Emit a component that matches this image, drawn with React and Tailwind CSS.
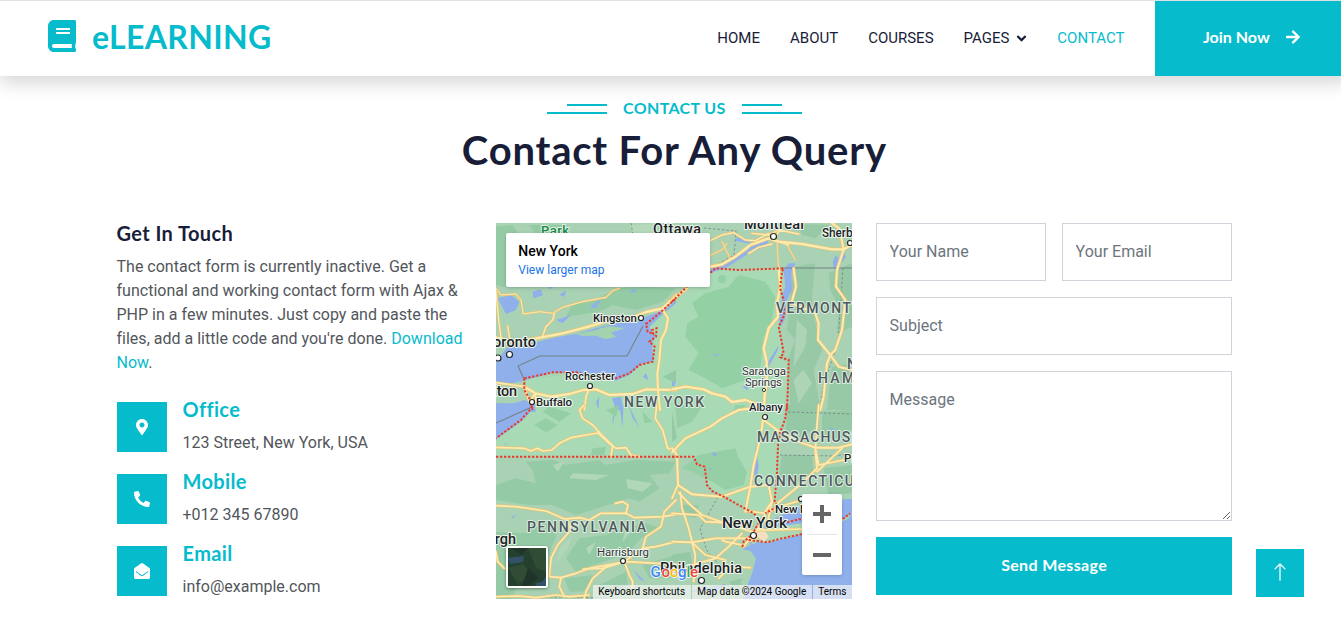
import { FaBook, FaArrowRight, FaMapMarkerAlt, FaPhoneAlt, FaEnvelopeOpen, FaAngleDown } from 'react-icons/fa';
import { BsArrowUp } from 'react-icons/bs';

const quads = {
  tl: 'translate(0 -3) scale(.33333)',
  tr: 'translate(176 -3) scale(.33333)',
  bl: 'translate(0 182) scale(.33333)',
  br: 'translate(176 182) scale(.33333)',
};

const roads = {
  tl: [
    ['M0 352 L50 365 L120 355 L200 340 L270 322 L330 304 L400 296 L450 276 L500 265 L540 225', 8],
    ['M0 205 L14 225 L60 222 L75 240 L82 282 L130 275 L170 280 L200 262 L260 245 L330 232 L350 212 L370 205', 4],
    ['M0 215 L8 300 L15 352 M35 318 L42 362 M175 282 L170 300 L150 320 L140 348', 5],
    ['M500 270 L516 295 L510 330 L495 360 L490 420 L484 460 L486 510 L492 570', 7],
    ['M85 500 L118 520 L165 530 L220 522 L262 510 L300 508 L340 525 L410 522 L450 508 L540 510', 8],
    ['M0 488 L50 495 L85 500 L100 545 L118 520 L120 545 M282 500 L270 530 L265 570', 6],
  ],
  tr: [
    ['M0 240 L45 205 M115 140 L150 133 L190 110 L235 75 L290 55 L320 65 L390 72 L480 88 L515 88 L540 75', 8],
    ['M115 62 L150 45 L185 38 L220 60 L250 62 L290 40 M240 40 L290 45 L320 30 L380 42 M330 20 L305 60 L350 75 M230 100 L260 82 L300 72', 5],
    ['M115 105 L150 90 L165 70 M150 65 L175 115 M315 68 L320 145 M345 75 L370 120', 3],
    ['M320 145 L325 200 L315 250 L318 290 L290 325 L275 385 L284 425 L284 490 L278 525 L276 570', 8],
    ['M365 145 L372 200 L358 250 L390 262 L430 280 L440 310 L438 360 L475 405 L500 440 L540 450', 7],
    ['M480 10 L502 25 L515 88 L495 150 L492 200 L520 240 L510 330 L490 390 L475 405 L465 430 L455 530 L445 570', 7],
    ['M0 508 L40 500 L95 508 L120 520 L160 530 L180 546 L220 540 L270 558 L300 570', 8],
  ],
  bl: [
    ['M0 127 L85 130 L105 138 L125 130 L140 138 L168 135 L190 115 L225 98 L305 84 L340 115 L360 130 L390 128 L405 150 L430 155', 6],
    ['M265 0 L250 15 L260 40 L290 60 L315 88 L350 122 L345 155 M482 0 L478 40 L500 75 L515 130 L540 135', 6],
    ['M0 302 L60 305 L150 318 L205 342 L250 338 L280 345 L315 325 L390 325 L415 338 L500 335 L540 328', 6],
    ['M358 295 L380 290 L396 300 L390 325 M540 285 L505 320 L495 365 L450 395 L440 430 L385 470 L320 490 L262 492', 6],
    ['M215 345 L225 375 L185 420 L165 460 L160 515 L195 518 L240 505 L280 490 L390 470 L540 478', 6],
    ['M195 518 L190 545 L205 575 M385 470 L400 510 L410 530 L408 570 M335 482 L290 520 L270 560 L262 590 M0 575 L70 573 L120 578 L180 570 L220 575 L280 570', 6],
    ['M540 410 L480 425 L440 430 M0 440 L5 470 L25 490', 6],
  ],
  br: [
    ['M0 142 L40 100 L115 65 L150 40 L200 15 L275 5', 7],
    ['M275 30 L265 100 L245 180 L235 245 L220 320 M275 45 L325 82 L380 110 L430 128 L500 128 L540 118', 7],
    ['M0 130 L15 150 L18 240 L60 268 L150 275 L235 245 L290 240 L300 290 L280 320', 7],
    ['M18 240 L0 280 M20 262 L50 295 L90 330 L160 355 L240 380 M0 325 L80 330 L100 350 L240 358', 6],
    ['M0 410 L60 412 L130 400 L240 400 M25 262 L30 310 L50 370 L70 450 L65 530', 6],
    ['M60 480 L130 460 L170 425 L210 385 M60 412 L100 450 L160 465 L160 500 L140 520 M180 485 L235 488 M150 405 L160 410 L210 420', 6],
    ['M440 0 L435 60 L430 140 L435 190 L390 235 L310 300 M430 128 L440 180 L515 165 L540 150 M435 200 L510 130', 6],
    ['M225 318 L280 325 L260 370 L245 390 M290 320 L340 300 L400 282 M260 375 L300 375 L390 372 M245 385 L280 340 M255 400 L225 410 L215 425 M300 290 L285 360', 6],
  ],
};

const borders = {
  tl: 'M85 475 L170 457 L240 457 L300 470 L360 475 L400 460 L430 435 L470 425 L476 380 L460 365 L480 350 L482 325 L468 330 L472 342 L455 335 L450 312 L490 280 L540 235 M85 475 L85 510 L100 535 L110 570',
  tr: 'M0 245 L45 200 M115 158 L130 145 L200 150 L335 145 L330 155 L324 205 L335 240 L337 285 L320 320 L330 370 L335 400 L325 412 L350 420 L348 500 L345 570',
  bl: 'M110 5 L95 22 L75 45 L40 70 L0 100 M0 155 L540 155',
  br: 'M0 155 L65 155 L75 178 L98 185 L105 240 L120 258 L155 275 L245 325 L265 345 L240 390 L215 410 L210 430 M345 0 L340 40 L325 80 L318 120 L315 200 L308 290 L316 305 L280 325 M345 352 L380 343 L430 340 L515 340 L535 325 M230 405 L285 412 L330 400 L400 385',
};

const places = [
  ['Park', 45, 12, 28, 13, 'park'],
  ['Ottawa', 157, 11, 48, 14.5, 'city'],
  ['Montreal', 248, 6, 60, 14.5, 'city'],
  ['Sherbrooke', 326, 14, 60, 12, 'town'],
  ['Kingston', 97, 99, 44, 11.5, 'town'],
  ['Toronto', -11, 124, 51, 14.5, 'city'],
  ['Hamilton', -36, 173, 57, 14.5, 'city'],
  ['Rochester', 69, 157, 50, 11, 'town'],
  ['Buffalo', 40, 183, 36, 11.5, 'town'],
  ['Saratoga', 246, 152, 44, 11.5, 'small'],
  ['Springs', 249, 163, 37, 11.5, 'small'],
  ['Albany', 253, 188, 34, 11.5, 'town'],
  ['Pittsburgh', -48, 321, 68, 14.5, 'city'],
  ['Harrisburg', 101, 333, 52, 11.5, 'small'],
  ['New York', 226, 305, 65, 15.5, 'city'],
  ['New Haven', 279, 290, 57, 11.5, 'town'],
  ['Philadelphia', 164, 350, 82, 14.5, 'city'],
  ['Providence', 348, 239, 60, 11.5, 'town'],
  ['NEW YORK', 128, 184, 80, 14, 'state'],
  ['VERMONT', 280, 90, 75, 14, 'state'],
  ['NEW', 351, 146, 38, 14, 'state'],
  ['HAMPSHIRE', 322, 160, 98, 14, 'state'],
  ['MASSACHUSETTS', 261, 219, 131, 14, 'state'],
  ['CONNECTICUT', 258, 263, 110, 14, 'state'],
  ['PENNSYLVANIA', 31, 309, 119, 14, 'state'],
];

const look = {
  park: 'fill-[#188646] font-medium stroke-[#e2f3e5]',
  city: 'fill-[#202124] font-medium stroke-[#eef7ef]',
  town: 'fill-[#202124] font-medium stroke-[#eef7ef]',
  small: 'fill-[#303236] font-normal stroke-[#eef7ef]',
  state: 'fill-[#50585b] font-medium stroke-[#dceee0]',
};

function MapDrawing() {
  return (
    <svg width="356" height="376" viewBox="0 0 356 376" className="block font-['Roboto',sans-serif]">
      <rect width="356" height="376" fill="#a8d2b3" />
      <path fill="#a8dbb5" d="M28 156 L80 151 L115 155 L157 138 L158 113 L150 98 L190 63 L215 46 L286 46 L284 98 L286 137 L292 140 L288 182 L280 282 L263 296 L227 273 L211 264 L208 243 L196 234 L0 234 L0 216 L36 185 Z" />
      <g transform={quads.tl}>
        <path fill="#94cba4" d="M0 20 L50 15 L70 45 L30 120 L60 150 L40 205 L0 195 Z M360 205 L450 200 L540 205 L500 245 L420 270 L350 255 L310 275 L210 290 L230 250 L300 240 Z M100 15 L200 15 L210 40 L120 45 Z M500 470 L540 450 L540 490 Z" />
        <path fill="#b4dabb" d="M60 90 L120 110 L150 180 L110 190 L80 160 Z M400 15 L470 12 L480 40 L410 40 Z" />
        <path fill="#8fb0eb" d="M5 235 L45 225 L70 245 L60 270 L30 282 Z M110 215 L135 208 L140 226 L112 235 Z M180 300 L225 285 L200 310 Z M280 262 L318 235 L300 265 Z M150 195 L180 198 L160 208 Z M400 220 L415 205 L420 216 Z M190 225 L210 210 L205 230 Z" />
        <path fill="#8fb0eb" d="M0 490 L0 430 L20 400 L35 380 L70 374 L125 365 L180 352 L240 342 L300 324 L360 310 L430 304 L450 290 L510 268 L540 240 L540 250 L490 292 L460 322 L478 350 L468 370 L472 425 L435 432 L400 465 L360 482 L300 476 L240 460 L170 458 L90 480 L40 491 Z M0 550 L45 553 L85 540 L115 550 L120 575 L0 580 Z" />
        <path fill="#a3d2af" d="M240 342 L290 332 L340 318 L385 325 L345 338 L360 350 L330 358 L300 347 L260 348 Z" />
        <path fill="#8fb0eb" d="M300 545 L310 530 L307 570 Z M348 535 L375 530 L382 570 L360 570 Z M440 470 L450 460 L458 480 Z" />
      </g>
      <g transform={quads.tr}>
        <path fill="#93d0a4" d="M200 165 L280 185 L310 230 L300 300 L275 350 L265 440 L220 480 L150 505 L110 480 L50 450 L80 400 L40 350 L45 310 L80 290 L60 250 L100 220 L170 200 Z" />
        <circle cx="150" cy="177" r="12" fill="#93d0a4" />
        <path fill="#98c9a7" d="M365 140 L430 130 L420 230 L430 310 L450 390 L425 450 L445 570 L355 570 L350 410 L370 360 L345 330 Z M470 160 L540 130 L540 320 L495 340 L500 260 L475 210 Z M380 12 L470 15 L430 55 L390 45 Z M480 440 L540 430 L540 570 L465 570 Z" />
        <path fill="#aed4b8" d="M375 300 L405 330 L400 380 L365 440 Z M395 450 L420 490 L380 550 L365 480 Z" />
        <path fill="#8fb0eb" d="M115 145 L170 125 L230 90 L235 72 L190 62 L195 50 L240 70 L290 58 L285 78 L235 97 L165 142 L115 160 Z M335 150 L350 130 L370 130 L358 160 L360 210 L345 240 L338 300 L325 320 L320 290 L330 230 L340 200 Z M320 375 L315 395 L290 440 L286 430 Z M212 500 L235 490 L225 510 Z M0 485 L10 485 L8 498 L0 498 Z M490 105 L482 130 L490 155 L500 115 Z M515 95 L508 130 L522 110 Z M125 405 L150 400 L128 410 Z" />
      </g>
      <g transform={quads.bl}>
        <path fill="#8fb0eb" d="M0 -5 L118 -5 L100 25 L75 50 L40 75 L0 103 Z M350 40 L360 5 L350 62 Z M370 0 L382 0 L380 70 Z M398 0 L430 68 L410 40 Z M25 110 L35 125 L28 120 Z M322 260 L335 248 L328 262 Z M375 275 L398 262 L380 278 Z M240 480 L250 455 L245 475 Z M45 335 L60 330 L50 340 Z M412 495 L448 530 L430 522 Z" />
        <path fill="#94caa5" d="M90 170 L170 165 L210 180 L310 165 L330 180 L420 165 L540 170 L520 205 L460 210 L490 250 L430 290 L400 280 L320 305 L240 330 L170 300 L100 300 L0 285 L0 240 L60 220 L120 235 L110 195 Z" />
        <path fill="#94cea4" d="M115 60 L150 40 L185 60 L150 82 Z M160 5 L225 25 L190 50 L140 20 Z M330 15 L370 0 L360 35 Z M440 20 L470 50 L445 55 Z M290 130 L330 125 L325 150 L285 150 Z" />
        <path fill="#94caa5" d="M0 380 L90 385 L160 345 L180 395 L165 430 L150 480 L80 515 L40 590 L0 590 Z M330 390 L430 350 L495 370 L435 400 L390 450 L290 480 L240 500 L210 460 L250 400 Z M205 520 L300 510 L260 560 L220 560 Z M310 540 L390 500 L395 540 L330 570 Z M440 480 L540 450 L540 520 L460 520 Z" />
        <path fill="#b1d7ba" d="M230 205 L340 210 L300 225 L220 220 Z M390 222 L470 235 L440 260 L395 250 Z M190 430 L230 390 L215 430 L180 480 Z M390 360 L430 350 L380 410 Z M270 430 L300 410 L280 450 Z M170 180 L205 170 L185 200 Z" />
      </g>
      <g transform={quads.br}>
        <path fill="#96cfa6" d="M30 190 L80 150 L190 130 L200 160 L225 200 L215 240 L160 255 L120 230 L90 215 L60 200 Z M10 0 L90 5 L60 50 L15 70 Z M190 0 L225 0 L180 30 Z" />
        <path fill="#95c8a5" d="M350 0 L440 0 L430 70 L380 100 L340 80 Z M330 150 L420 150 L425 200 L370 235 L320 220 Z M450 20 L540 15 L540 100 L450 100 Z M30 300 L80 300 L70 340 L30 330 Z M0 450 L55 440 L60 480 L0 510 Z M170 530 L210 520 L200 560 Z M0 20 L15 100 L0 110 Z M455 190 L540 180 L540 265 L470 270 Z" />
        <path fill="#8fb0eb" d="M210 432 L235 438 L252 460 L242 500 L230 530 L222 560 L205 600 L552 600 L552 280 L500 285 L450 300 L370 310 L300 345 L275 365 L285 380 L285 405 L250 415 Z M252 120 L260 180 L252 245 L245 190 Z M475 65 L480 90 L490 75 Z M120 140 L138 148 L125 155 Z M110 185 L120 195 L112 195 Z" />
        <path fill="#abd9b6" d="M250 408 L262 382 L310 365 L390 355 L460 340 L515 342 L540 325 L530 340 L465 370 L390 388 L285 414 Z" />
        <path fill="#f4dfc0" d="M242 375 L275 370 L290 395 L275 412 L262 400 L235 410 Z" />
        <path fill="none" stroke="#8fb0eb" strokeWidth="5" d="M100 590 L120 560 L160 540 L60 560 M240 440 L235 410" />
      </g>
      <g fill="none" stroke="#758286" strokeWidth="1">
        <path d="M28 156 L22 143 L44 133 L131 133 L147 103 M0 200 L36 184 M22 143 L28 156 M286 45 L356 45" strokeWidth="1.1" />
        <path d="M292 189 L356 191 M284 232 L340 233 L356 230 M222 274 L204 306 L211 328 L224 343 M135 0 L137 12 M208 5 L240 8 L238 32 L218 43 M347 45 L342 120 L328 160 L323 190 M0 373 L110 375" strokeDasharray="2.5 2" strokeWidth=".8" />
      </g>
      {Object.keys(roads).map((q) => (
        <g key={q} transform={quads[q]} fill="none" strokeLinejoin="round" strokeLinecap="round">
          {roads[q].map(([d, w]) => <path key={d} d={d} stroke="#e5c477" strokeWidth={w + 3} />)}
          {roads[q].map(([d, w]) => <path key={d} d={d} stroke="#fdebb0" strokeWidth={w - 1} />)}
        </g>
      ))}
      {Object.keys(borders).map((q) => (
        <path key={q} transform={quads[q]} d={borders[q]} fill="none" stroke="#ea3a2c" strokeWidth="6" strokeDasharray="7 5" />
      ))}
      <g fill="#fff" stroke="#24282a" strokeWidth="1.2">
        <circle cx="277.500" cy="13.500" r="3" />
        <circle cx="354" cy="20" r="2.500" />
        <circle cx="145" cy="95" r="2.500" />
        <circle cx="13.500" cy="131.500" r="3" />
        <circle cx="2" cy="135" r="3" />
        <circle cx="94" cy="163" r="2.500" />
        <circle cx="36" cy="179" r="2.500" />
        <circle cx="268" cy="167" r="1.600" strokeWidth=".9" />
        <circle cx="269" cy="194" r="2.500" />
        <circle cx="127" cy="338" r="2.500" />
        <circle cx="257.500" cy="312.500" r="3" />
        <circle cx="205.500" cy="357.500" r="3" />
        <circle cx="305" cy="276" r="2.500" />
      </g>
      {places.map(([name, x, y, width, size, kind]) => (
        <text key={name} x={x} y={y} fontSize={size} textLength={width} strokeWidth="2" strokeLinejoin="round" paintOrder="stroke" className={look[kind]}>
          {name}
        </text>
      ))}
      <g fontSize="15" fontWeight="500" strokeWidth="1.6" stroke="#fff" paintOrder="stroke">
        <text x="154.500" y="354" fill="#4285f4">G</text>
        <text x="165.500" y="354" fill="#ea4335">o</text>
        <text x="174" y="354" fill="#fbbc04">o</text>
        <text x="182" y="354" fill="#4285f4">g</text>
        <text x="190.500" y="354" fill="#34a853">l</text>
        <text x="194" y="354" fill="#ea4335">e</text>
      </g>
    </svg>
  );
}

function MapPanel() {
  return (
    <div className="relative h-[376px] overflow-hidden">
      <MapDrawing />
      <div className="absolute left-2.5 top-2.5 h-[54px] w-[204px] rounded-[2px] bg-white px-3 pt-[9px] font-['Roboto',sans-serif] shadow-[0_1px_4px_-1px_rgba(0,0,0,0.3)]">
        <div className="text-sm leading-[18px] font-medium text-black">New York</div>
        <div className="mt-px text-xs leading-[18px] text-[#1a73e8]">View larger map</div>
      </div>
      <div className="absolute left-2.5 top-[323px] size-[42px] rounded-[3px] border-2 border-white shadow-[0_1px_3px_rgba(0,0,0,0.4)]">
        <svg viewBox="0 0 38 38" className="block size-[38px]">
          <rect width="38" height="38" fill="#26402f" />
          <path fill="#304c34" d="M20 0 L38 0 L38 24 L28 20 Z M0 20 L15 16 L24 27 L10 36 Z" />
          <path fill="#203529" d="M4 0 L20 0 L13 7 Z M20 20 L31 30 L20 38 L14 38 Z" />
          <path fill="#34516a" d="M0 10 L16 8 L15 14 L2 16 Z M38 29 L34 34 L28 35 L28 38 L38 38 Z" />
        </svg>
      </div>
      <div className="absolute left-[306px] top-[271px] flex h-[81px] w-10 flex-col rounded-[2px] bg-white shadow-[0_1px_4px_-1px_rgba(0,0,0,0.3)]">
        <div className="flex h-10 items-center justify-center">
          <svg viewBox="0 0 18 18" className="size-[18px]"><path d="M7 0h4v7h7v4h-7v7H7v-7H0V7h7z" fill="#666" /></svg>
        </div>
        <div className="mx-[5px] h-px bg-[#e6e6e6]" />
        <div className="flex h-10 items-center justify-center">
          <svg viewBox="0 0 18 18" className="size-[18px]"><path d="M0 7h18v4H0z" fill="#666" /></svg>
        </div>
      </div>
      <div className="absolute right-0 bottom-0 flex h-[14px] gap-px font-['Roboto',sans-serif] text-[10px] leading-[14px] whitespace-nowrap text-black">
        <div className="w-[98px] bg-[#f5f5f5]/70 pl-[5px]">Keyboard shortcuts</div>
        <div className="w-[120px] bg-[#f5f5f5]/70 pl-[5px]">Map data ©2024 Google</div>
        <div className="w-[39px] bg-[#f5f5f5]/70 pl-[5px]">Terms</div>
      </div>
    </div>
  );
}

function ContactLine({ icon: Icon, title, text }) {
  return (
    <div className="flex h-[50px] items-center">
      <div className="flex size-[50px] shrink-0 items-center justify-center bg-[#06bbcc] text-white">
        <Icon className="size-4" />
      </div>
      <div className="ml-4">
        <h5 className="-mt-0.5 mb-2.5 font-['Lato',sans-serif] text-xl leading-6 font-bold tracking-[0.35px] text-[#06bbcc]">{title}</h5>
        <p className="leading-6">{text}</p>
      </div>
    </div>
  );
}

const field = 'w-full rounded-none border border-[#ced4da] bg-white px-[12.5px] pb-[2px] text-[#52565b] placeholder:text-[#6c757d] outline-none';

export default function App() {
  return (
    <div className="h-[638px] overflow-hidden bg-white font-['Roboto',sans-serif] text-base text-[#52565b]">
      <div className="w-[1349px]">
        <header className="flex h-[76px] border-t border-[#dee2e6] bg-white shadow-[0_8px_16px_rgba(0,0,0,0.15)]">
          <div className="flex items-center pb-1 pl-12 text-[#06bbcc]">
            <FaBook className="mr-4 mb-0.5 h-8 w-7" />
            <h2 className="font-['Lato',sans-serif] text-[32px] leading-[38px] font-bold tracking-[0.35px]">eLEARNING</h2>
          </div>
          <nav className="ml-auto flex items-center gap-[30px] pr-[30.5px] text-[15px] font-normal text-[#181d38]">
            <a>HOME</a>
            <a>ABOUT</a>
            <a>COURSES</a>
            <a className="flex items-center">PAGES<FaAngleDown className="ml-[7px] h-[15px] w-[11px]" /></a>
            <a className="text-[#06bbcc]">CONTACT</a>
          </nav>
          <a className="flex w-[194px] items-center bg-[#06bbcc] pb-[3px] pl-12 font-['Lato',sans-serif] font-bold text-white">
            Join Now<FaArrowRight className="ml-[15px] size-4" />
          </a>
        </header>

        <main className="ml-[116.5px] w-[1115.6px] pt-5">
          <div className="flex flex-col items-center">
            <div className="flex h-6 items-center gap-4">
              <div className="flex w-[60px] flex-col items-end gap-1.5 pt-0.5">
                <div className="h-0.5 w-10 bg-[#06bbcc]" />
                <div className="h-0.5 w-[60px] bg-[#06bbcc]" />
              </div>
              <h6 className="w-[103px] text-center font-['Lato',sans-serif] text-base tracking-[0.35px] whitespace-nowrap font-bold text-[#06bbcc]">CONTACT US</h6>
              <div className="flex w-[60px] flex-col gap-1.5 pt-0.5">
                <div className="h-0.5 w-10 bg-[#06bbcc]" />
                <div className="h-0.5 w-[60px] bg-[#06bbcc]" />
              </div>
            </div>
            <h1 className="mt-1.5 font-['Lato',sans-serif] text-[40px] leading-[48px] font-bold tracking-[0.8px] text-[#181d38]">Contact For Any Query</h1>
          </div>

          <div className="mt-[49px] grid grid-cols-[356px_356px_356px] gap-[23.8px]">
            <div>
              <h5 className="-mt-0.5 mb-2.5 font-['Lato',sans-serif] text-xl leading-6 font-bold tracking-[0.4px] text-[#181d38]">Get In Touch</h5>
              <p className="mb-6 leading-6 tracking-[0.01px] whitespace-nowrap">
                The contact form is currently inactive. Get a<br />
                functional and working contact form with Ajax &amp;<br />
                PHP in a few minutes. Just copy and paste the<br />
                files, add a little code and you're done. <a className="text-[#06bbcc]">Download<br />Now</a>.
              </p>
              <div className="flex flex-col gap-[22px] pt-[3px]">
                <ContactLine icon={FaMapMarkerAlt} title="Office" text="123 Street, New York, USA" />
                <ContactLine icon={FaPhoneAlt} title="Mobile" text="+012 345 67890" />
                <ContactLine icon={FaEnvelopeOpen} title="Email" text="info@example.com" />
              </div>
            </div>

            <MapPanel />

            <form className="flex flex-col gap-4">
              <div className="grid grid-cols-2 gap-4">
                <input className={`h-[58px] ${field}`} placeholder="Your Name" />
                <input className={`h-[58px] ${field}`} placeholder="Your Email" />
              </div>
              <input className={`h-[58px] ${field}`} placeholder="Subject" />
              <textarea className={`block h-[150px] resize-y pt-4 ${field}`} placeholder="Message" />
              <button type="button" className="h-[58px] bg-[#06bbcc] pb-0.5 font-['Lato',sans-serif] font-bold tracking-[0.35px] text-white">Send Message</button>
            </form>
          </div>
        </main>
      </div>
      <a className="fixed left-[1256px] top-[549px] flex size-12 items-center justify-center bg-[#06bbcc] pb-0.5 text-white">
        <BsArrowUp className="size-5" />
      </a>
    </div>
  );
}
